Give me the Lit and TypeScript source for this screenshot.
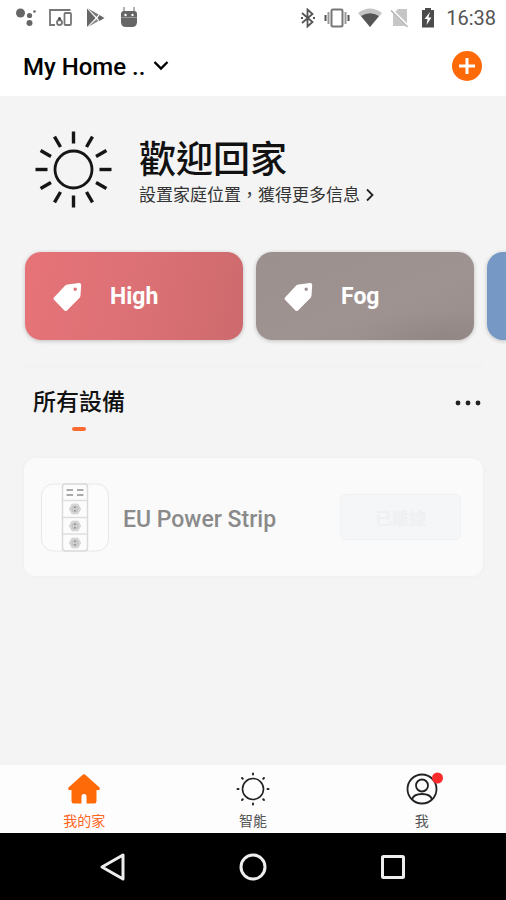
import { LitElement, html, css, svg } from "lit";
import { customElement, property } from "lit/decorators.js";

const rays = (cx: number, cy: number, r1: number, r2: number, count: number) =>
  Array.from({ length: count }, (_, i) => {
    const a = (i * 2 * Math.PI) / count;
    return svg`<line x1=${cx + r1 * Math.cos(a)} y1=${cy + r1 * Math.sin(a)}
      x2=${cx + r2 * Math.cos(a)} y2=${cy + r2 * Math.sin(a)} />`;
  });

@customElement("status-bar")
class StatusBar extends LitElement {
  static styles = css`
    :host {
      display: flex;
      justify-content: space-between;
      align-items: center;
      height: 36px;
      padding: 0 10px 0 16px;
      background: #fff;
    }
    .group {
      display: flex;
      align-items: center;
    }
    .left {
      gap: 13px;
    }
    .right {
      gap: 8px;
    }
    svg {
      display: block;
    }
    time {
      font: 400 20px/24px Roboto, sans-serif;
      color: #555;
    }
  `;
  render() {
    return html`
      <div class="group left">
        <svg width="20" height="20" viewBox="0 0 20 20" fill="#666">
          <circle cx="4.500" cy="5" r="4.500" />
          <circle cx="13.500" cy="7.500" r="2.600" />
          <circle cx="13.500" cy="15" r="3" />
          <circle cx="18.500" cy="3.500" r="1.300" />
        </svg>
        <svg width="24" height="20" viewBox="0 0 24 20" fill="none" stroke="#777" stroke-width="1.800">
          <path d="M6 17H1V2H21.500" />
          <rect x="15.500" y="5" width="6.500" height="12" rx="1" />
          <circle cx="10.500" cy="14.500" r="2.500" />
          <circle cx="10.500" cy="10.500" r="1.500" fill="#444" stroke="none" />
        </svg>
        <svg width="20" height="20" viewBox="0 0 20 20">
          <path d="M1 0.500V19L9.500 10z" fill="#666" />
          <path d="M2 0.500L12.500 6.500L10.500 9z" fill="#777" />
          <path d="M2 19L12.500 13L10.500 11z" fill="#8a8a8a" />
          <path d="M13.500 7L18.500 10L13.500 13L11.500 10z" fill="#666" />
        </svg>
        <svg width="20" height="22" viewBox="0 0 20 22">
          <path d="M5 0V5M15 0V5" stroke="#999" stroke-width="1.500" />
          <path d="M2 10V7Q2 4 5 4H15Q18 4 18 7V10z" fill="#666" />
          <path d="M2 11H18V15Q18 20 13 20H7Q2 20 2 15z" fill="#666" />
          <path d="M2 10.500H18" stroke="#999" />
          <circle cx="6.500" cy="8" r="1.200" fill="#fff" />
          <circle cx="13.500" cy="8" r="1.200" fill="#fff" />
        </svg>
      </div>
      <div class="group right">
        <svg width="16" height="20" viewBox="0 0 16 20" fill="none" stroke="#555" stroke-width="1.800">
          <path d="M2 5L12.500 14L7.500 18.500V1.500L12.500 6L2 15" />
          <path d="M1 10H3M13 10H15" stroke-width="2" />
        </svg>
        <svg width="26" height="20" viewBox="0 0 26 20" fill="none" stroke="#777">
          <rect x="7.500" y="1.500" width="11" height="17" rx="1.500" stroke-width="2" />
          <path d="M4.500 4V16M21.500 4V16" stroke="#999" stroke-width="2" />
          <path d="M1.500 7V13M24.500 7V13" stroke="#555" stroke-width="2" />
        </svg>
        <svg width="24" height="20" viewBox="0 0 24 20">
          <path d="M0 5Q12 -4 24 5L12 19z" fill="#c4c4c4" />
          <path d="M3 8Q12 2.500 21 8L12 19z" fill="#555" />
        </svg>
        <svg width="20" height="20" viewBox="0 0 20 20">
          <path d="M8 1H17V18H3V6z" fill="#c6c6c6" />
          <path d="M1.500 2L18.500 19" stroke="#fff" stroke-width="3" />
          <path d="M1 2.500L17.500 19" stroke="#b0b0b0" stroke-width="1.500" />
        </svg>
        <svg width="20" height="20" viewBox="0 0 20 20">
          <path d="M4 2H7V0H13V2H16V19.500H4z" fill="#4c4c4c" />
          <path d="M12 4L6.500 11H9.500L8.500 17L13.500 9.500H10.500z" fill="#fff" />
        </svg>
        <time>16:38</time>
      </div>
    `;
  }
}

@customElement("scene-card")
class SceneCard extends LitElement {
  @property() name = "";
  @property({ reflect: true }) tone = "red";

  static styles = css`
    :host {
      display: block;
      flex: 0 0 218px;
    }
    button {
      display: flex;
      align-items: center;
      gap: 26px;
      width: 100%;
      height: 88px;
      padding: 2px 27px 0;
      border: 0;
      border-radius: 16px;
      box-shadow: 0 1px 4px rgba(0, 0, 0, 0.22);
      color: #fff;
      font: 700 23px/28px Roboto, sans-serif;
    }
    .red {
      background: linear-gradient(100deg, #e67378, #dc7175 50%, #cd6a6d);
    }
    .grey {
      background:
        radial-gradient(ellipse 90px 26px at 86% 96%, rgba(130, 118, 114, 0.3), transparent),
        linear-gradient(160deg, #9c908e, #9f9392 60%, #998d8b);
    }
    .blue {
      background: #7598c5;
    }
    svg {
      display: block;
      flex: none;
    }
  `;
  render() {
    return html`
      <button class=${this.tone} type="button" aria-label=${this.name || "Scene"}>
        <svg width="32" height="32" viewBox="0 0 32 32" fill="#fff">
          <path
            fill-rule="evenodd"
            d="M15.500 3.500L27 2Q29.200 1.800 29.200 4L28.500 14.500Q28.300 16 27.400 17L15 29.400Q13.700 30.600 12.400 29.400L2 18.800Q0.900 17.600 2 16.400L12.500 5.200Q13.700 3.900 15.500 3.500zM23.200 6.500a1.700 1.700 0 1 0 0.010 0z"
          />
        </svg>
        <span>${this.name}</span>
      </button>
    `;
  }
}

@customElement("app-root")
class AppRoot extends LitElement {
  static styles = css`
    :host {
      display: flex;
      flex-direction: column;
      min-height: 100vh;
      background: #f4f4f4;
      color: #111;
      font-family: Roboto, "Noto Sans CJK TC", sans-serif;
      overflow-x: hidden;
    }
    svg {
      display: block;
    }
    button {
      margin: 0;
      padding: 0;
      border: 0;
      background: none;
      color: inherit;
      font-family: inherit;
    }
    a {
      color: inherit;
      text-decoration: none;
    }
    header {
      display: flex;
      align-items: center;
      justify-content: space-between;
      height: 60px;
      padding: 0 24px 0 23px;
      background: #fff;
    }
    .home {
      display: flex;
      align-items: center;
      gap: 8px;
      padding-top: 2px;
      font-size: 24px;
      font-weight: 500;
      line-height: 28px;
      color: #000;
    }
    main {
      flex: 1;
    }
    .welcome {
      display: flex;
      align-items: center;
      gap: 27px;
      padding: 35px 24px 0 35px;
    }
    .greeting {
      padding-top: 6px;
    }
    h1 {
      margin: 0;
      font-size: 37px;
      line-height: 44px;
      font-weight: 500;
    }
    .hint {
      display: flex;
      align-items: center;
      gap: 4px;
      font-size: 17px;
      line-height: 24px;
      color: #333;
    }
    .scenes {
      display: flex;
      gap: 13px;
      padding: 44px 0 24px 25px;
      overflow: hidden;
    }
    .rule {
      margin: 0 24px;
      border: 0;
      border-top: 4px solid #f2f2f2;
    }
    .devices {
      display: flex;
      justify-content: space-between;
      align-items: flex-start;
      padding: 19px 25px 0 33px;
    }
    .tab {
      display: flex;
      flex-direction: column;
      align-items: center;
      gap: 8px;
      margin: 0;
      font-size: 23px;
      line-height: 32px;
      font-weight: 500;
    }
    .tab::after {
      content: "";
      width: 14px;
      height: 4px;
      border-radius: 2px;
      background: #fb6a30;
    }
    .more {
      padding: 13px 0;
    }
    .device {
      display: flex;
      align-items: center;
      gap: 14px;
      margin: 27px 23px 24px 24px;
      padding: 24px 22px 24px 17px;
      border-radius: 12px;
      background: #fafafa;
      box-shadow: 0 0 5px rgba(0, 0, 0, 0.03);
    }
    .device-name {
      flex: 1;
      margin: 0;
      font-size: 23px;
      line-height: 28px;
      font-weight: 500;
      color: #8a8a8a;
      padding-top: 6px;
    }
    .offline {
      width: 121px;
      height: 46px;
      border: 1px solid #f0f1f3;
      border-radius: 6px;
      background: #f5f6f8;
      color: #eef0f1;
      font-size: 17px;
      font-weight: 700;
    }
    .tabs {
      display: grid;
      grid-template-columns: repeat(3, 1fr);
      height: 68px;
      background: #fdfdfd;
    }
    .tabs a {
      display: flex;
      flex-direction: column;
      align-items: center;
      gap: 4px;
      padding-top: 6px;
      font-size: 14px;
      line-height: 20px;
      color: #555;
    }
    .tabs a.active {
      color: #ff6420;
    }
    .system {
      display: flex;
      justify-content: center;
      align-items: center;
      gap: 108px;
      height: 67px;
      background: #000;
    }
  `;

  render() {
    return html`
      <status-bar></status-bar>
      <header>
        <button class="home" type="button">
          My Home ..
          <svg width="16" height="12" viewBox="0 0 16 12" fill="none" stroke="#000" stroke-width="2.400">
            <path d="M1.500 1L8 7.500L14.500 1" />
          </svg>
        </button>
        <button type="button" aria-label="Add">
          <svg width="30" height="30" viewBox="0 0 30 30">
            <circle cx="15" cy="15" r="15" fill="#ff6a08" />
            <path d="M15 7V23M7 15H23" stroke="#fff" stroke-width="3" />
          </svg>
        </button>
      </header>
      <main>
        <section class="welcome">
          <svg width="77" height="77" viewBox="0 0 77 77" fill="none" stroke="#151515" stroke-width="3">
            <circle cx="38.500" cy="38.500" r="18.500" stroke-width="2.800" />
            <g stroke-width="3.400">${rays(38.5, 38.5, 26, 38, 12)}</g>
          </svg>
          <div class="greeting">
            <h1>歡迎回家</h1>
            <a class="hint" href="#location">
              設置家庭位置，獲得更多信息
              <svg width="12" height="14" viewBox="0 0 12 14" fill="none" stroke="#222" stroke-width="1.800">
                <path d="M3 1.500L8.500 7L3 12.500" />
              </svg>
            </a>
          </div>
        </section>
        <section class="scenes">
          <scene-card name="High" tone="red"></scene-card>
          <scene-card name="Fog" tone="grey"></scene-card>
          <scene-card tone="blue"></scene-card>
        </section>
        <hr class="rule" />
        <section class="devices">
          <h2 class="tab">所有設備</h2>
          <button class="more" type="button" aria-label="More">
            <svg width="26" height="6" viewBox="0 0 26 6" fill="#222">
              <circle cx="3" cy="3" r="2.400" />
              <circle cx="13" cy="3" r="2.400" />
              <circle cx="23" cy="3" r="2.400" />
            </svg>
          </button>
        </section>
        <article class="device">
          <svg width="68" height="70" viewBox="0 0 68 70" fill="none" stroke="#e8e8e8">
            <rect x="0.500" y="2" width="67" height="67" rx="12" fill="#fcfcfc" />
            <rect x="21.500" y="2" width="25" height="67" rx="3" stroke="#dadada" stroke-width="1.500" />
            <path d="M22 18.500H46M22 35.500H46M22 52H46" stroke="#dedede" stroke-width="1.500" />
            <path d="M25.500 8H32M36 8H42.500M25.500 13H32M36 13H42.500" stroke="#aaa" stroke-width="1.800" />
            ${[27, 44, 61].map(
              (y) => svg`<g transform="translate(34 ${y})">
                <path d="M-5.500 0L-3 -4.800H3L5.500 0L3 4.800H-3z" fill="#dcdcdc" stroke="#cfcfcf" />
                <circle r="3.200" fill="#d2d2d2" stroke="#bdbdbd" />
                <circle cy="-1.600" r="0.900" fill="#888" stroke="none" />
                <circle cy="1.600" r="0.900" fill="#888" stroke="none" />
              </g>`,
            )}
          </svg>
          <h3 class="device-name">EU Power Strip</h3>
          <button class="offline" type="button" disabled>已離線</button>
        </article>
      </main>
      <nav class="tabs">
        <a class="active" href="#home">
          <svg width="36" height="36" viewBox="0 0 36 36">
            <path
              d="M17 3.600Q18 2.700 19 3.600L33.500 16.500Q34.500 18.500 33 19H30.500V30Q30.500 32.500 28.500 32.500H20.500V25Q20.500 23 18 23T15.500 25V32.500H7.500Q5.500 32.500 5.500 30V19H3Q1.500 18.500 2.500 16.500z"
              fill="#ff6a08"
            />
          </svg>
          我的家
        </a>
        <a href="#smart">
          <svg width="36" height="36" viewBox="0 0 36 36" fill="none" stroke="#222">
            <circle cx="18" cy="18" r="10.500" stroke-width="1.600" />
            <g stroke-width="2" stroke-linecap="round">${rays(18, 18, 14.5, 15.5, 8)}</g>
          </svg>
          智能
        </a>
        <a href="#me">
          <svg width="44" height="36" viewBox="0 0 44 36" fill="none" stroke="#222" stroke-width="1.800">
            <circle cx="22" cy="18" r="14.500" />
            <circle cx="22" cy="14.500" r="6" />
            <path d="M12 28.500C13 24.500 17 23 22 23S31 24.500 32 28.500" />
            <circle cx="37.500" cy="7" r="5.500" fill="#fb2b2b" stroke="none" />
          </svg>
          我
        </a>
      </nav>
      <nav class="system">
        <button type="button" aria-label="Back">
          <svg width="32" height="32" viewBox="0 0 32 32" fill="none" stroke="#eee" stroke-width="3">
            <path d="M26 4V28L5 16z" stroke-linejoin="round" />
          </svg>
        </button>
        <button type="button" aria-label="Home">
          <svg width="32" height="32" viewBox="0 0 32 32" fill="none" stroke="#eee" stroke-width="3">
            <circle cx="16" cy="16" r="12" />
          </svg>
        </button>
        <button type="button" aria-label="Recents">
          <svg width="32" height="32" viewBox="0 0 32 32" fill="none" stroke="#eee" stroke-width="3">
            <rect x="5.500" y="5.500" width="21" height="21" rx="1" />
          </svg>
        </button>
      </nav>
    `;
  }
}
